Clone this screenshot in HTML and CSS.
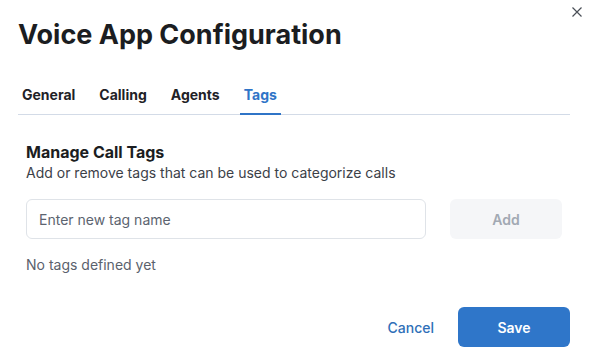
FILE: index.html
```html
<!DOCTYPE html>
<html lang="en">
<head>
    <meta charset="UTF-8">
    <meta name="viewport" content="width=device-width, initial-scale=1.0">
    <title>Voice App Configuration</title>
    <link rel="stylesheet" href="styles.css">
</head>
<body>
    <div class="dialog">
        <button class="close-btn" aria-label="Close">
            <svg width="10" height="10" viewBox="0 0 10 10">
                <path d="M0.5 0.5 L9.5 9.5 M9.5 0.5 L0.5 9.5" stroke="#4a4f57" stroke-width="1.2" fill="none"/>
            </svg>
        </button>

        <h1 class="dialog-title">Voice App Configuration</h1>

        <div class="tabs">
            <div class="tab">General</div>
            <div class="tab">Calling</div>
            <div class="tab">Agents</div>
            <div class="tab active">Tags</div>
        </div>

        <div class="tab-panel">
            <h3>Manage Call Tags</h3>
            <p class="hint">Add or remove tags that can be used to categorize calls</p>

            <div class="tag-form">
                <input type="text" id="tagName" placeholder="Enter new tag name">
                <button class="add-btn" disabled>Add</button>
            </div>

            <p class="empty">No tags defined yet</p>
        </div>

        <div class="dialog-footer">
            <button class="cancel-btn">Cancel</button>
            <button class="save-btn">Save</button>
        </div>
    </div>
</body>
</html>
```

FILE: styles.css
```css
body {
    margin: 0;
    font-family: Inter, 'Noto Sans', sans-serif;
    background-color: #fff;
    color: #1b1d21;
}
.dialog {
    position: relative;
    width: 552px;
    padding: 19px 21px 0 18px;
}
.close-btn {
    position: absolute;
    top: 5px;
    right: 9px;
    background: none;
    border: none;
    padding: 0;
    cursor: pointer;
}
.dialog-title {
    margin: 0 0 34px;
    font-size: 27px;
    line-height: 32px;
    font-weight: 700;
}
.tabs {
    display: flex;
    gap: 16px;
    border-bottom: 1px solid #d3dbe7;
}
.tab {
    padding: 0 4px 8px;
    font-size: 14px;
    line-height: 20px;
    font-weight: 700;
    color: #1f2227;
    border-bottom: 2px solid transparent;
    margin-bottom: -1px;
}
.tab.active {
    color: #2f74c7;
    border-bottom-color: #2f74c7;
}
.tab-panel {
    padding: 26px 8px 0;
}
.tab-panel h3 {
    margin: 0;
    font-size: 16px;
    line-height: 22px;
    font-weight: 700;
}
.hint {
    margin: 0;
    font-size: 14px;
    line-height: 20px;
    color: #3c4148;
}
.tag-form {
    display: flex;
    gap: 24px;
    margin-top: 16px;
}
.tag-form input {
    flex: 1;
    height: 40px;
    box-sizing: border-box;
    padding: 0 12px;
    border: 1px solid #dfe3e8;
    border-radius: 6px;
    font-family: inherit;
    font-size: 14px;
    color: #1b1d21;
}
.tag-form input::placeholder {
    color: #5c6470;
}
.add-btn {
    width: 112px;
    height: 40px;
    border: none;
    border-radius: 6px;
    background-color: #f5f6f8;
    color: #a2a9b3;
    font-family: inherit;
    font-size: 14px;
    font-weight: 600;
}
.empty {
    margin: 16px 0 0;
    font-size: 14px;
    line-height: 20px;
    color: #5a616c;
}
.dialog-footer {
    display: flex;
    justify-content: flex-end;
    align-items: center;
    gap: 24px;
    margin-top: 32px;
}
.cancel-btn {
    background: none;
    border: none;
    padding: 0;
    color: #2f6fb8;
    font-family: inherit;
    font-size: 14px;
    font-weight: 500;
    cursor: pointer;
}
.save-btn {
    width: 112px;
    height: 40px;
    border: none;
    border-radius: 6px;
    background-color: #2f76c9;
    color: #fff;
    font-family: inherit;
    font-size: 14px;
    font-weight: 600;
    cursor: pointer;
}
```
